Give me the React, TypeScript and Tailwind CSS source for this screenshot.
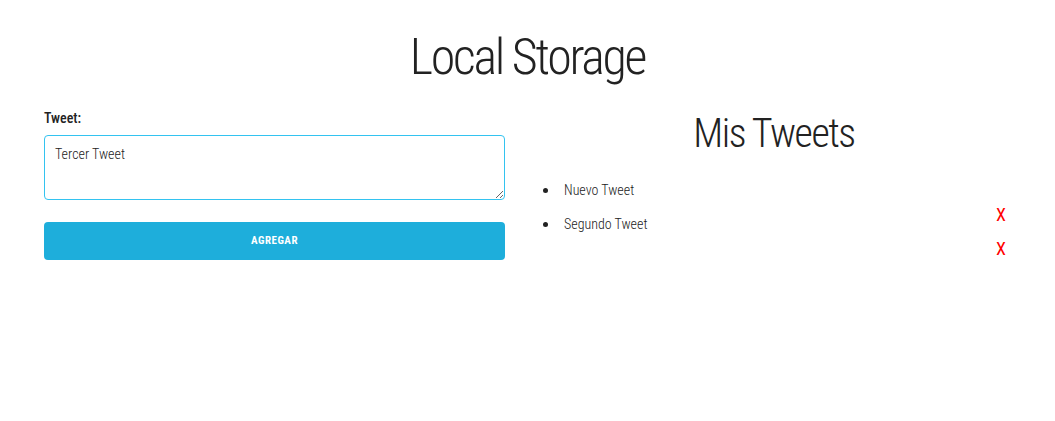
import { useState } from "react";

const font = { fontFamily: '"Roboto Condensed", "Liberation Sans Narrow", Roboto, sans-serif' };

export default function App() {
  const [tweets] = useState(["Nuevo Tweet", "Segundo Tweet"]);
  const [text, setText] = useState("Tercer Tweet");

  return (
    <div className="min-h-[421px] bg-white text-[#222]" style={font}>
      <h1 className="pt-[24px] text-center text-[50px] font-light leading-[66px] tracking-[-2.3px]">
        Local Storage
      </h1>

      <div className="flex pl-[44px] pr-[32px]">
        <div className="w-[461px] pt-[18px]">
          <label className="block text-[14px] font-medium leading-[20px]">Tweet:</label>
          <textarea
            value={text}
            onChange={(e) => setText(e.target.value)}
            className="mt-[7px] block h-[65px] w-full rounded-[4px] border border-[#33c3f0] px-[10px] py-[8px] text-[14px] font-light leading-[20px] outline-none"
          />
          <button className="mt-[22px] block h-[38px] w-full rounded-[4px] bg-[#1eaedb] text-[11px] font-bold tracking-[0.5px] text-white">
            AGREGAR
          </button>
        </div>

        <div className="ml-[20px] flex-1">
          <h2 className="pt-[18px] text-center text-[40px] font-light leading-[52px] tracking-[-1.5px]">
            Mis Tweets
          </h2>
          <ul className="mt-[20px] pl-[18px] text-[14px] font-light leading-[20px]">
            {tweets.map((t) => (
              <li key={t} className="mb-[14px] flex items-center">
                <span className="mr-[16px] h-[5px] w-[5px] rounded-full bg-[#222]" />
                <span>{t}</span>
                <span className="relative top-[25px] ml-auto mr-[17px] text-[18px] font-normal text-[#ff0000]">
                  X
                </span>
              </li>
            ))}
          </ul>
        </div>
      </div>
    </div>
  );
}
